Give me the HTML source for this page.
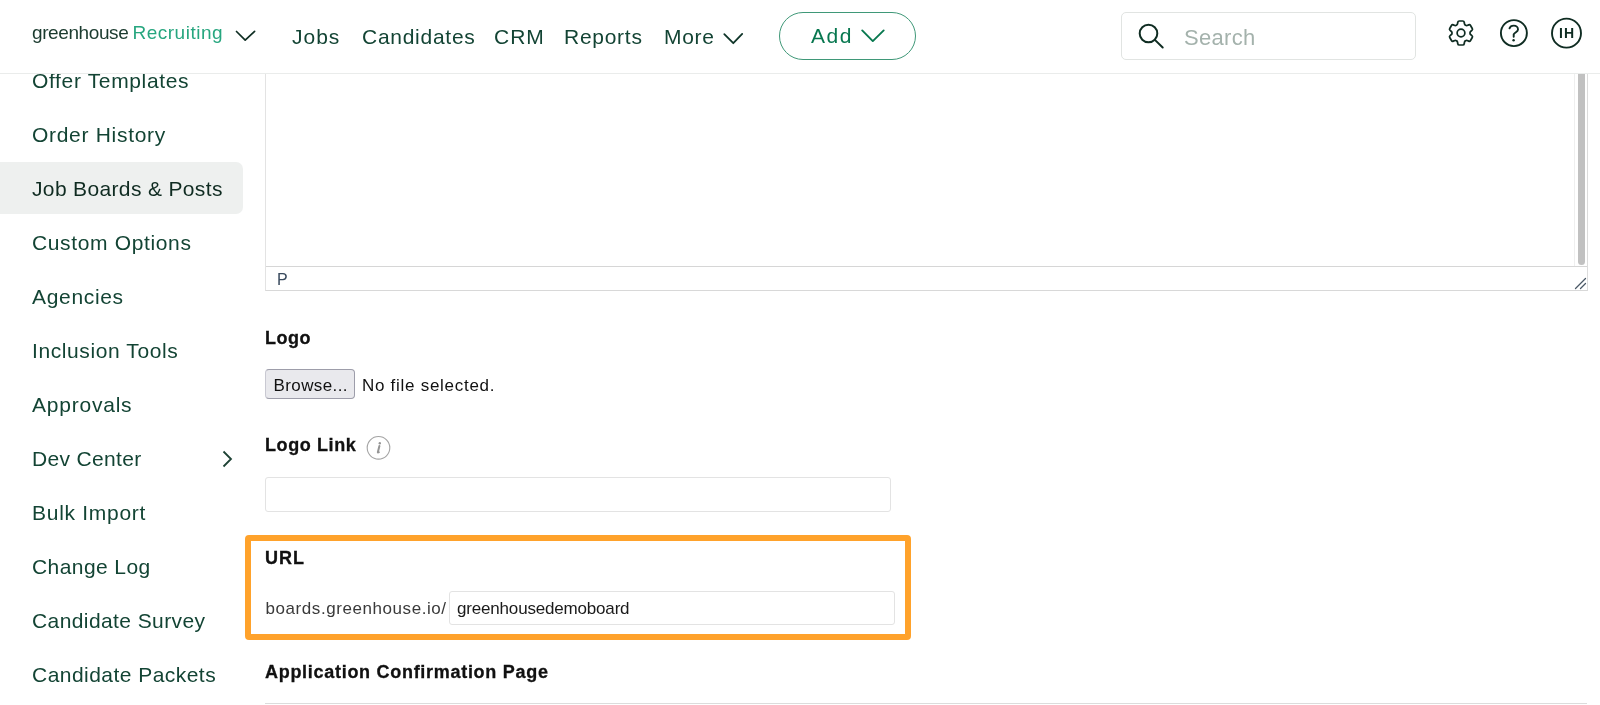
<!DOCTYPE html>
<html>
<head>
<meta charset="utf-8">
<style>
html,body{margin:0;padding:0;width:1600px;height:705px;overflow:hidden;background:#fff;}
body{position:relative;will-change:transform;font-family:"Liberation Sans",sans-serif;}
.t{position:absolute;white-space:pre;line-height:1;}
.side{font-size:21px;color:#134434;}
.nav{font-size:21px;color:#134434;}
.b{font-weight:700;color:#111;font-size:18px;-webkit-text-stroke:0.3px #111;}
.hdr{position:absolute;left:0;top:0;width:1600px;height:73px;background:#fff;border-bottom:1px solid #eaeceb;z-index:5;}
</style>
</head>
<body>
<!-- header -->
<div class="hdr"></div>
<div class="t" id="lg1" style="left:32px;top:23.2px;font-size:19px;color:#1a3a2e;z-index:6;letter-spacing:-0.4px">greenhouse</div>
<div class="t" id="lg2" style="left:132.5px;top:23px;font-size:19px;color:#27a67f;z-index:6;letter-spacing:0.5px">Recruiting</div>
<svg style="position:absolute;left:234px;top:28px;z-index:6" width="24" height="16"><polyline points="2.5,3.5 11.2,12.2 20.6,3.3" fill="none" stroke="#0f2e23" stroke-width="1.7" stroke-linecap="round" stroke-linejoin="round"/></svg>

<div class="t nav" id="n1" style="left:292px;top:26px;z-index:6;letter-spacing:1px">Jobs</div>
<div class="t nav" id="n2" style="left:362px;top:26px;z-index:6;letter-spacing:0.73px">Candidates</div>
<div class="t nav" id="n3" style="left:494px;top:26px;z-index:6;letter-spacing:1px">CRM</div>
<div class="t nav" id="n4" style="left:564px;top:26px;z-index:6;letter-spacing:0.73px">Reports</div>
<div class="t nav" id="n5" style="left:664px;top:26px;z-index:6;letter-spacing:0.7px">More</div>
<svg style="position:absolute;left:722px;top:31px;z-index:6" width="24" height="16"><polyline points="2.3,3.1 11.3,12.2 20.2,2.9" fill="none" stroke="#0f3529" stroke-width="1.8" stroke-linecap="round" stroke-linejoin="round"/></svg>

<div style="position:absolute;left:779px;top:12px;width:135px;height:46px;border:1px solid #3f9878;border-radius:24px;z-index:6"></div>
<div class="t nav" id="n6" style="left:811px;top:24.8px;z-index:7;color:#07774f;letter-spacing:1.5px">Add</div>
<svg style="position:absolute;left:859px;top:27px;z-index:7" width="28" height="18"><polyline points="3.2,3.4 13.8,14.1 24.7,3.4" fill="none" stroke="#08784f" stroke-width="1.9" stroke-linecap="round" stroke-linejoin="round"/></svg>

<div style="position:absolute;left:1121px;top:12px;width:293px;height:46px;border:1px solid #e1e4e2;border-radius:5px;z-index:6"></div>
<svg style="position:absolute;left:1134px;top:20px;z-index:7" width="34" height="32"><circle cx="14.5" cy="13.5" r="8.8" fill="none" stroke="#0f2c22" stroke-width="2"/><line x1="20.9" y1="19.9" x2="28.7" y2="27.5" stroke="#0f2c22" stroke-width="2" stroke-linecap="round"/></svg>
<div class="t" id="srch" style="left:1184px;top:27px;font-size:22px;color:#a4b2ac;z-index:7;letter-spacing:0.3px">Search</div>

<!-- gear -->
<svg style="position:absolute;left:1445px;top:17px;z-index:7" width="32" height="32" viewBox="0 0 24 24" fill="none" stroke="#0f2c22" stroke-width="1.3">
<path stroke-linecap="round" stroke-linejoin="round" d="M9.594 3.94c.09-.542.56-.94 1.11-.94h2.593c.55 0 1.02.398 1.11.94l.213 1.281c.063.374.313.686.645.87.074.04.147.083.22.127.325.196.72.257 1.075.124l1.217-.456a1.125 1.125 0 0 1 1.37.49l1.296 2.247a1.125 1.125 0 0 1-.26 1.431l-1.003.827c-.293.241-.438.613-.43.992a7.723 7.723 0 0 1 0 .255c-.008.378.137.75.43.991l1.004.827c.424.35.534.955.26 1.43l-1.298 2.247a1.125 1.125 0 0 1-1.369.491l-1.217-.456c-.355-.133-.75-.072-1.076.124a6.47 6.470 0 0 1-.22.128c-.331.183-.581.495-.644.869l-.213 1.281c-.09.543-.56.94-1.110.94h-2.594c-.55 0-1.019-.398-1.11-.94l-.213-1.281c-.062-.374-.312-.686-.644-.87a6.52 6.52 0 0 1-.22-.127c-.325-.196-.72-.257-1.076-.124l-1.217.456a1.125 1.125 0 0 1-1.369-.49l-1.297-2.247a1.125 1.125 0 0 1 .26-1.431l1.004-.827c.292-.24.437-.613.43-.991a6.932 6.932 0 0 1 0-.255c.007-.38-.138-.751-.43-.992l-1.004-.827a1.125 1.125 0 0 1-.26-1.43l1.297-2.247a1.125 1.125 0 0 1 1.37-.491l1.216.456c.356.133.751.072 1.076-.124.072-.044.146-.086.22-.128.332-.183.582-.495.644-.869l.214-1.28Z"/>
<circle cx="12" cy="12" r="2.9"/>
</svg>
<!-- help -->
<svg style="position:absolute;left:1496px;top:15px;z-index:7" width="36" height="36" viewBox="0 0 36 36">
<circle cx="17.9" cy="18.1" r="13" fill="none" stroke="#0f2c22" stroke-width="1.9"/>
<path d="M13.5 13.4 C14.1 11.5 15.8 10.6 17.8 10.6 C20.2 10.6 22 12.2 22 14.4 C22 17 18.4 17.6 17.7 19.4 L17.7 21.8" fill="none" stroke="#0f2c22" stroke-width="1.9" stroke-linecap="round"/>
<circle cx="17.6" cy="25.2" r="1.2" fill="#0f2c22"/>
</svg>
<!-- avatar -->
<svg style="position:absolute;left:1548px;top:15px;z-index:7" width="38" height="38" viewBox="0 0 38 38">
<circle cx="18.5" cy="18.15" r="14.5" fill="none" stroke="#0f2c22" stroke-width="1.9"/>
</svg>
<div class="t" id="ih" style="left:1559px;top:26px;font-size:14px;font-weight:700;color:#0f2c22;z-index:8;letter-spacing:1px">IH</div>

<!-- sidebar -->
<div style="position:absolute;left:0;top:162px;width:243px;height:52px;background:#eef0ef;border-radius:0 7px 7px 0"></div>
<div class="t side" id="s1" style="left:32px;top:70px;letter-spacing:0.65px">Offer Templates</div>
<div class="t side" id="s2" style="left:32px;top:124px;letter-spacing:0.7px">Order History</div>
<div class="t side" id="s3" style="left:32px;top:178px;color:#0f2b21;letter-spacing:0.35px">Job Boards &amp; Posts</div>
<div class="t side" id="s4" style="left:32px;top:232px;letter-spacing:0.64px">Custom Options</div>
<div class="t side" id="s5" style="left:32px;top:286px;letter-spacing:0.67px">Agencies</div>
<div class="t side" id="s6" style="left:32px;top:340px;letter-spacing:0.6px">Inclusion Tools</div>
<div class="t side" id="s7" style="left:32px;top:394px;letter-spacing:0.78px">Approvals</div>
<div class="t side" id="s8" style="left:32px;top:448px;letter-spacing:0.34px">Dev Center</div>
<svg style="position:absolute;left:218px;top:448px" width="18" height="22"><polyline points="5.5,3.5 13,11 5.5,18.5" fill="none" stroke="#1d4234" stroke-width="1.8"/></svg>
<div class="t side" id="s9" style="left:32px;top:502px;letter-spacing:0.72px">Bulk Import</div>
<div class="t side" id="s10" style="left:32px;top:556px;letter-spacing:0.42px">Change Log</div>
<div class="t side" id="s11" style="left:32px;top:610px;letter-spacing:0.41px">Candidate Survey</div>
<div class="t side" id="s12" style="left:32px;top:664px;letter-spacing:0.46px">Candidate Packets</div>

<!-- textarea -->
<div style="position:absolute;left:265px;top:40px;width:1321px;height:249px;border:1px solid #d8d8d8;border-left-color:#e3e3e3;border-right-color:#dcdcdc;"></div>
<div style="position:absolute;left:266px;top:266px;width:1321px;height:1px;background:#d6d6d6"></div>
<div style="position:absolute;left:1574px;top:40px;width:12px;height:226px;background:#fff;border-left:1px solid #efefef"></div>
<div style="position:absolute;left:1578px;top:40px;width:7px;height:225px;background:#c1c1c1;border-radius:4px"></div>
<div class="t" id="p" style="left:277px;top:272px;font-size:16px;color:#3a4b5e">P</div>
<svg style="position:absolute;left:1572px;top:276px" width="16" height="14"><line x1="3.5" y1="12.5" x2="13.5" y2="2.5" stroke="#4a5866" stroke-width="1.3" stroke-linecap="round"/><line x1="8.5" y1="12.5" x2="13.5" y2="7.5" stroke="#4a5866" stroke-width="1.3" stroke-linecap="round"/></svg>

<!-- Logo -->
<div class="t b" id="m1" style="left:265px;top:329px;letter-spacing:0.5px">Logo</div>
<div style="position:absolute;left:265px;top:369px;width:88px;height:28px;background:#e9e9ed;border:1px solid #9d9daa;border-left-color:#c9c9d2;border-radius:4px"></div>
<div class="t" id="m2" style="left:273.5px;top:377px;font-size:17px;color:#111;letter-spacing:0.4px">Browse...</div>
<div class="t" id="m3" style="left:362px;top:377px;font-size:17px;color:#111;letter-spacing:0.72px">No file selected.</div>

<div class="t b" id="m4" style="left:265px;top:436px;letter-spacing:0.6px">Logo Link</div>
<svg style="position:absolute;left:364px;top:433px" width="30" height="30"><circle cx="14.5" cy="14.8" r="11.3" fill="none" stroke="#a3a3a3" stroke-width="1.1"/><path d="M15.4 13 L13.9 19 Q13.7 19.8 14.9 19.2" fill="none" stroke="#959595" stroke-width="2" stroke-linecap="round"/><circle cx="15.8" cy="10.2" r="1.2" fill="#959595"/></svg>
<div style="position:absolute;left:265px;top:477px;width:624px;height:33px;border:1px solid #e3e3e3;border-radius:3px"></div>

<!-- URL highlight -->
<div style="position:absolute;left:244.5px;top:535px;width:654px;height:93px;border:6px solid #ffa22b;border-radius:4px"></div>
<div class="t b" id="m5" style="left:265px;top:549px;letter-spacing:1px">URL</div>
<div class="t" id="m6" style="left:265.5px;top:599.5px;font-size:17px;color:#3a3a3a;letter-spacing:0.57px">boards.greenhouse.io/</div>
<div style="position:absolute;left:449px;top:591px;width:444px;height:32px;border:1px solid #e3e3e3;border-radius:3px"></div>
<div class="t" id="m7" style="left:457px;top:599.5px;font-size:17px;color:#1a1a1a;letter-spacing:-0.18px">greenhousedemoboard</div>

<div class="t b" id="m8" style="left:265px;top:663px;letter-spacing:0.71px">Application Confirmation Page</div>
<div style="position:absolute;left:265px;top:703px;width:1322px;height:1px;background:#dcdcdc"></div>
</body>
</html>
